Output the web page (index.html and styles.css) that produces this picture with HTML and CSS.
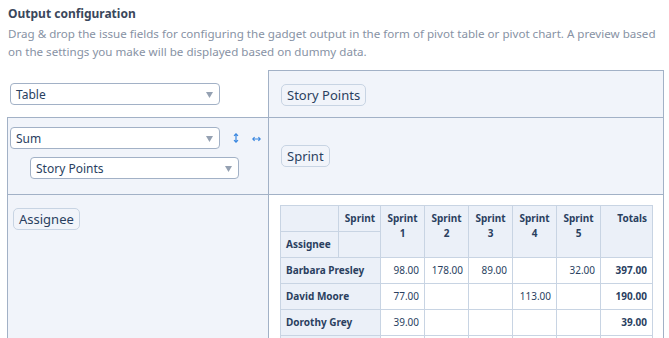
FILE: index.html
```html
<!DOCTYPE html>
<html>
<head>
<meta charset="utf-8">
<link rel="stylesheet" href="styles.css">
</head>
<body>
<div class="page">
  <div class="title">Output configuration</div>
  <p class="desc">Drag &amp; drop the issue fields for configuring the gadget output in the form of pivot table or pivot chart. A preview based on the settings you make will be displayed based on dummy data.</p>

  <div class="pvt-ui">
    <div class="cell renderer">
      <div class="select wide">
        <span>Table</span>
        <svg class="caret" width="7" height="6" viewBox="0 0 7 6"><path d="M0 0H7L3.5 6Z" fill="#95a1b2"/></svg>
      </div>
    </div>
    <div class="cell axis unused">
      <span class="attr">Story Points</span>
    </div>
    <div class="cell axis vals">
      <div class="agg-row">
        <div class="select wide">
          <span>Sum</span>
          <svg class="caret" width="7" height="6" viewBox="0 0 7 6"><path d="M0 0H7L3.5 6Z" fill="#95a1b2"/></svg>
        </div>
        <svg class="order-v" width="6" height="10" viewBox="0 0 6 10"><path d="M3 0.8V9.2M1 2.8L3 0.8L5 2.8M1 7.2L3 9.2L5 7.2" fill="none" stroke="#3a87e0" stroke-width="1.2"/></svg>
        <svg class="order-h" width="9" height="6" viewBox="0 0 9 6"><path d="M0.8 3H8.2M2.6 1.2L0.8 3L2.6 4.8M6.4 1.2L8.2 3L6.4 4.8" fill="none" stroke="#3a87e0" stroke-width="1.1"/></svg>
      </div>
      <div class="select wide indent">
        <span>Story Points</span>
        <svg class="caret" width="7" height="6" viewBox="0 0 7 6"><path d="M0 0H7L3.5 6Z" fill="#95a1b2"/></svg>
      </div>
    </div>
    <div class="cell axis cols">
      <span class="attr">Sprint</span>
    </div>
    <div class="cell axis rows">
      <span class="attr">Assignee</span>
    </div>
    <div class="cell output">
      <table class="pvt-table">
        <colgroup>
          <col style="width:58px"><col style="width:42px"><col style="width:44px"><col style="width:44px"><col style="width:44px"><col style="width:44px"><col style="width:44px"><col style="width:52px">
        </colgroup>
        <thead>
          <tr>
            <th></th>
            <th class="axis-label">Sprint</th>
            <th class="col-label" rowspan="2">Sprint 1</th>
            <th class="col-label" rowspan="2">Sprint 2</th>
            <th class="col-label" rowspan="2">Sprint 3</th>
            <th class="col-label" rowspan="2">Sprint 4</th>
            <th class="col-label" rowspan="2">Sprint 5</th>
            <th class="total-label" rowspan="2">Totals</th>
          </tr>
          <tr>
            <th class="axis-label left">Assignee</th>
            <th></th>
          </tr>
        </thead>
        <tbody>
          <tr>
            <th colspan="2" class="row-label">Barbara Presley</th>
            <td>98.00</td><td>178.00</td><td>89.00</td><td></td><td>32.00</td><td class="total">397.00</td>
          </tr>
          <tr>
            <th colspan="2" class="row-label">David Moore</th>
            <td>77.00</td><td></td><td></td><td>113.00</td><td></td><td class="total">190.00</td>
          </tr>
          <tr>
            <th colspan="2" class="row-label">Dorothy Grey</th>
            <td>39.00</td><td></td><td></td><td></td><td></td><td class="total">39.00</td>
          </tr>
          <tr class="partial">
            <th colspan="2"></th>
            <td></td><td></td><td></td><td></td><td></td><td></td>
          </tr>
        </tbody>
      </table>
    </div>
  </div>
</div>
</body>
</html>
```

FILE: styles.css
```css
* { box-sizing: border-box; }
html, body { margin: 0; padding: 0; background: #fff; }
body {
  font-family: "Noto Sans", "Open Sans", sans-serif;
  color: #2a3f5f;
  overflow: hidden;
}
.page { padding: 5px 0 0 7px; }
.title {
  padding-left: 1px;
  font-size: 12px;
  line-height: 18px;
  font-weight: 700;
  color: #3a475b;
}
.desc {
  margin: 2px 0 0;
  padding-left: 1px;
  width: 660px;
  font-size: 11.6px;
  line-height: 18px;
  color: #8792a4;
}
.pvt-ui {
  margin-top: 9px;
  display: grid;
  grid-template-columns: 261px 396px;
  grid-template-rows: 47px 77px 160px;
}
.cell { min-width: 0; }
.axis {
  background: #f1f4fa;
  border-top: 1px solid #a2b1c6;
  border-left: 1px solid #a2b1c6;
}
.unused { border-right: 1px solid #a2b1c6; padding: 12px 0 0 12px; }
.cols {
  border-right: 1px solid #a2b1c6;
  display: flex;
  align-items: center;
  padding: 0 0 0 12px;
}
.renderer { padding: 13px 0 0 3px; }
.vals { padding: 9px 0 0 2px; }
.rows { padding: 12px 0 0 5px; }
.output {
  border-top: 1px solid #a2b1c6;
  border-left: 1px solid #a2b1c6;
  border-right: 1px solid #a2b1c6;
  background: #fff;
  padding: 10px 0 0 11px;
}
.select {
  height: 22px;
  background: #fff;
  border: 1px solid #a2b1c6;
  border-radius: 4px;
  display: flex;
  align-items: center;
  justify-content: space-between;
  padding: 0 6px 0 5px;
  font-size: 12px;
  color: #2a3f5f;
}
.select.wide { width: 210px; }
.select.indent { margin: 8px 0 0 20px; width: 209px; }
.caret { flex: none; margin-top: 2px; }
.agg-row { display: flex; align-items: center; }
.order-v { flex: none; margin-left: 13px; margin-top: -1px; }
.order-h { flex: none; margin-left: 13px; margin-top: 1px; }
.attr {
  display: inline-block;
  height: 22px;
  line-height: 20px;
  padding: 0 5px;
  border: 1px solid #c8d4e3;
  border-radius: 5px;
  background: #f1f4fa;
  font-size: 13px;
  color: #2a3f5f;
}
.pvt-table {
  border-collapse: collapse;
  table-layout: fixed;
  width: 372px;
  font-size: 10px;
  line-height: 15px;
}
.pvt-table th, .pvt-table td {
  border: 1px solid #c8d4e3;
  padding: 5px;
  height: 26px;
  vertical-align: top;
  overflow: hidden;
  white-space: nowrap;
}
.pvt-table th {
  background: #ebf0f8;
  font-weight: 700;
  color: #2a3f5f;
  text-align: left;
}
.pvt-table th.axis-label { text-align: right; }
.pvt-table th.axis-label.left { text-align: left; }
.pvt-table th.col-label { text-align: center; white-space: normal; padding: 5px 4px; }
.pvt-table th.total-label { text-align: right; }
.pvt-table th.row-label { text-align: left; }
.pvt-table td {
  background: #fff;
  text-align: right;
  color: #2a3f5f;
}
.pvt-table td.total { font-weight: 700; }
```
